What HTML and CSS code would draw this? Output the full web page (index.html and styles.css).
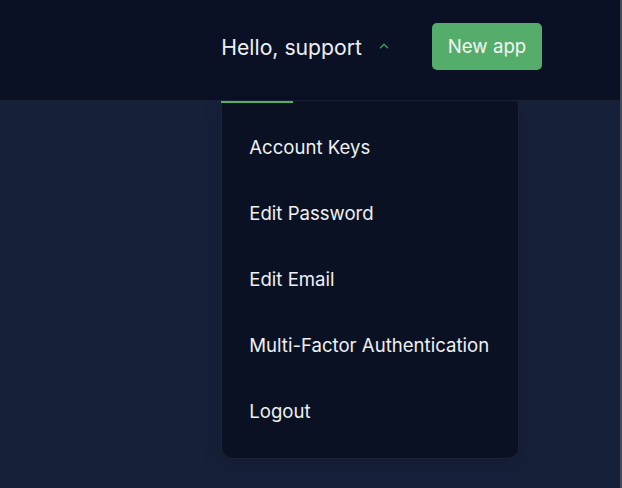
FILE: index.html
```html
<!DOCTYPE html>
<html>
<head>
<meta charset="utf-8">
<link rel="stylesheet" href="styles.css">
</head>
<body>
<div class="page">
  <header class="topbar">
    <div class="user-menu">
      <span class="greeting">Hello, support</span>
      <svg class="chevron" width="10" height="6" viewBox="0 0 10 6"><path d="M1 5.2 L5 1.2 L9 5.2" fill="none" stroke="#3e9c56" stroke-width="1.4"/></svg>
      <span class="active-bar"></span>
      <div class="dropdown">
        <a class="item">Account Keys</a>
        <a class="item">Edit Password</a>
        <a class="item">Edit Email</a>
        <a class="item">Multi-Factor Authentication</a>
        <a class="item">Logout</a>
      </div>
    </div>
    <button class="new-app">New app</button>
  </header>
  <main class="content"></main>
  <div class="edge"></div>
</div>
</body>
</html>
```
FILE: styles.css
```css
html, body {
  margin: 0;
  padding: 0;
  height: 100%;
}
body {
  background: #162039;
  font-family: Inter, "Noto Sans", sans-serif;
  color: #f1f3f6;
  overflow: hidden;
}
.page {
  position: relative;
  height: 488px;
}
.topbar {
  height: 100px;
  background: #0a1125;
  border-bottom: 1px solid #1c2335;
  display: flex;
  align-items: center;
  justify-content: flex-end;
  padding-right: 80px;
  box-sizing: content-box;
}
.user-menu {
  position: relative;
  height: 100%;
  box-sizing: border-box;
  padding-bottom: 7px;
  display: flex;
  align-items: center;
  margin-right: 43px;
}
.greeting {
  font-size: 21.2px;
  color: #eef0f4;
}
.chevron {
  margin-left: 17px;
  margin-top: -1px;
  display: block;
}
.active-bar {
  position: absolute;
  left: 0;
  top: 101px;
  width: 72px;
  height: 2px;
  background: #55b066;
  z-index: 2;
}
.dropdown {
  position: absolute;
  left: 0;
  top: 101px;
  width: 296px;
  padding: 13px 0 14px;
  background: #0a1122;
  border: 1px solid #1b2334;
  border-top: none;
  border-radius: 0 0 11px 11px;
  display: flex;
  flex-direction: column;
  box-shadow: 0 6px 20px rgba(0,0,0,0.15);
}
.item {
  height: 66px;
  display: flex;
  align-items: center;
  padding-left: 27px;
  font-size: 18.6px;
  color: #eef0f4;
}
.new-app {
  width: 110px;
  height: 47px;
  border: none;
  border-radius: 5px;
  background: #55ad6b;
  color: #f4f7f4;
  font-family: Inter, "Noto Sans", sans-serif;
  font-size: 18.7px;
  padding: 0;
  margin-bottom: 7px;
}
.content {
  height: 387px;
}
.edge {
  position: absolute;
  right: 0;
  top: 0;
  width: 2px;
  height: 100%;
  background: #454b58;
}
```
